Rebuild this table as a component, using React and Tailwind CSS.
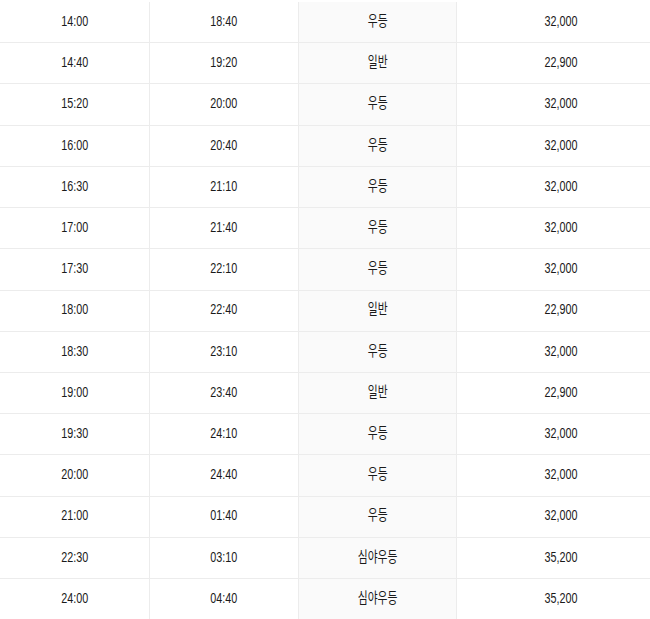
const rows = [
  ["14:00", "18:40", "우등", "32,000"],
  ["14:40", "19:20", "일반", "22,900"],
  ["15:20", "20:00", "우등", "32,000"],
  ["16:00", "20:40", "우등", "32,000"],
  ["16:30", "21:10", "우등", "32,000"],
  ["17:00", "21:40", "우등", "32,000"],
  ["17:30", "22:10", "우등", "32,000"],
  ["18:00", "22:40", "일반", "22,900"],
  ["18:30", "23:10", "우등", "32,000"],
  ["19:00", "23:40", "일반", "22,900"],
  ["19:30", "24:10", "우등", "32,000"],
  ["20:00", "24:40", "우등", "32,000"],
  ["21:00", "01:40", "우등", "32,000"],
  ["22:30", "03:10", "심야우등", "35,200"],
  ["24:00", "04:40", "심야우등", "35,200"],
];

function Cell({ children, gray, last }) {
  return (
    <div
      className={`flex items-center justify-center pb-[2px] ${last ? "" : "border-r border-[#ececec]"} ${gray ? "bg-[#fafafa]" : "bg-white"}`}
    >
      <span className="inline-block scale-x-[0.72] text-[15px] text-[#1a1a1a]">{children}</span>
    </div>
  );
}

export default function App() {
  return (
    <div className="w-[650px] h-[619px] overflow-hidden bg-white font-['Liberation_Sans','Noto_Sans_CJK_KR',sans-serif]">
      <div className="w-[665px] pt-[2px]">
        {rows.map((r, i) => (
          <div
            key={i}
            className="grid grid-cols-[150px_149px_158px_208px] h-[41.23px] border-b border-[#ececec]"
          >
            <Cell>{r[0]}</Cell>
            <Cell>{r[1]}</Cell>
            <Cell gray>{r[2]}</Cell>
            <Cell last>{r[3]}</Cell>
          </div>
        ))}
      </div>
    </div>
  );
}
